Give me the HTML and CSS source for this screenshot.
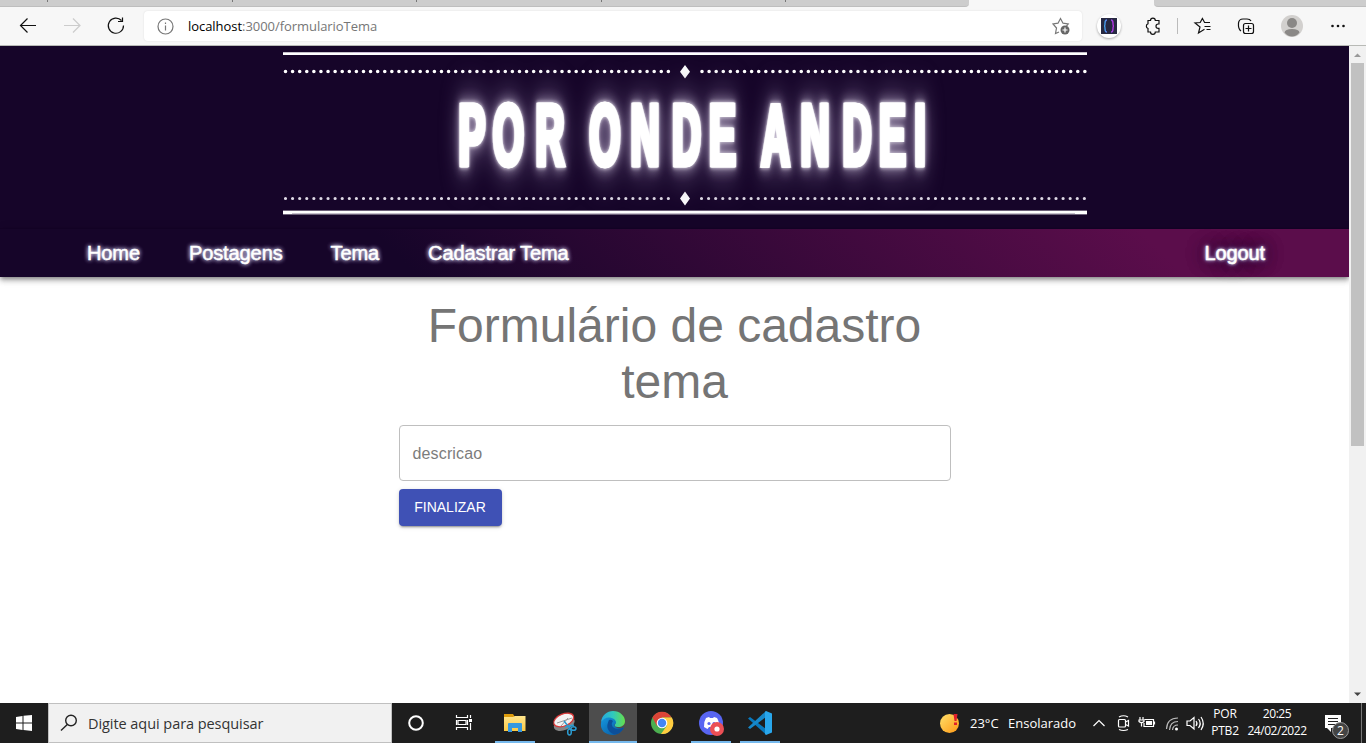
FILE: index.html
```html
<!DOCTYPE html>
<html lang="pt-BR">
<head>
<meta charset="utf-8">
<title>Por Onde Andei</title>
<link rel="stylesheet" href="styles.css">
</head>
<body>
<div class="tabs"><div class="tabs-left"><i></i><i></i><i></i><i></i><i></i></div><div class="tab-active"></div><div class="tabs-right"></div></div>
<header class="toolbar">
  <svg class="tb-nav" width="144" height="38" fill="none" stroke="#111" stroke-width="1.2">
    <path d="M36 18.5H20.5M27.500 11.500L20.500 18.500L27.500 25.500"/>
    <path stroke="#ccc" d="M64 18.500H79.500M73 11.500L80 18.500L73 25.500"/>
    <path d="M121.500 13.500A7.600 7.600 0 1 0 123.500 18.500M122.500 10.500V14.500H118"/>
  </svg>
  <div class="address">
    <svg width="17" height="17" fill="none" stroke="#777" stroke-width="1.2"><circle cx="8.500" cy="8.500" r="7.500"/><path d="M8.500 7.500V12.500M8.500 4.500V6"/></svg>
    <span class="url"><b>localhost</b>:3000/formularioTema</span>
    <svg class="fav" width="18" height="18" fill="none" stroke="#777" stroke-width="1.200"><path d="M7 15L3.500 16.500L4.500 11L1 7L6 6.200L8.500 1.500L11 6.200L16.200 7L14.500 9"/><circle cx="13" cy="13" r="4.500" fill="#666" stroke="none"/><path stroke="#fff" d="M13 10.500V15.500M10.500 13H15.500"/></svg>
  </div>
  <svg class="tb-actions" width="284" height="38" fill="none" stroke="#111" stroke-width="1.200">
    <defs><linearGradient id="br"><stop offset="0" stop-color="#3aa8e8"/><stop offset="1" stop-color="#6478e8"/></linearGradient><linearGradient id="br2"><stop offset="0" stop-color="#8a4ce0"/><stop offset="1" stop-color="#c42be0"/></linearGradient></defs>
    <circle class="ext" cx="27" cy="19" r="12" fill="#fff" stroke="none"/>
    <path fill="#272942" stroke="none" d="M19 11h16v16H19z"/>
    <path stroke="url(#br)" stroke-width="1.400" d="M25 13Q23 13 23 16.500Q23 19 22 19Q23 19 23 21.500Q23 25 25 25"/><path stroke="url(#br2)" stroke-width="1.400" d="M29 13Q31 13 31 16.500Q31 19 32 19Q31 19 31 21.500Q31 25 29 25"/>
    <path d="M66 13.500H68.500A2.400 2.400 0 0 1 73.300 13.500H77V17H76.200A2.200 2.200 0 0 0 76.200 21.400H77V25H73.300A2.400 2.400 0 0 1 68.500 25H66V21.500A2.500 2.500 0 0 1 66 16.800Z"/>
    <path stroke="#bbb" stroke-width="1" d="M95.500 11V27"/>
    <path d="M122.500 22.300L116.500 26L118 20L113 16L118.200 15.500L120.400 11.500L122.600 15.500H128M122.500 19.500H128.500M124.500 22.500H128.500"/>
    <path d="M159 24Q156 22 156.500 16Q157 12 161 12H165Q168 12 169 14"/><rect x="161.500" y="16.500" width="10" height="10" rx="2"/><path d="M166.500 18.500V24.500M163.500 21.500H169.500"/>
    <g stroke="none"><circle cx="210" cy="19" r="11" fill="#d2d0ce"/><circle cx="210" cy="16" r="5" fill="#8a8886"/><path fill="#8a8886" d="M202.500 25.500Q203 22 210 22T217.500 25.500Q214.500 29.500 210 29.500T202.500 25.500"/><g fill="#111"><circle cx="250.500" cy="19" r="1.300"/><circle cx="256" cy="19" r="1.300"/><circle cx="261.500" cy="19" r="1.300"/></g></g>
  </svg>
</header>
<div class="viewport">
  <main class="page">
    <svg class="banner" width="1349" height="183" viewBox="0 46 1349 183" role="img" aria-label="Por onde andei">
      <path fill="#fff" d="M283 52.300H1087V55H283z"/><path fill="#cbbdd6" d="M353 52H1017V53H353z"/>
      <path fill="#c6c0cc" d="M283 210.500H1087V214.500H283z"/><path fill="#fff" d="M283 211H1087V213H283zM283 212h9v2h-9zM1075 212h12v2h-12z"/>
      <g class="dots"><path d="M285.500 71.500H669M702 71.500H1086"/><path class="small" d="M285.500 198.500H669M701.500 198.500H1085"/></g>
      <path fill="#fff" d="M685 65L690 71.700L685 78.500L680 71.700zM685 191.500L690 198.500L685 205.500L680 198.500z"/>
      <g class="title" transform="scale(.455 1)"><text y="165" x="1037.400 1117.600 1208.800 1252.700 1329.700 1417.600 1508.800 1587.900 1641.800 1704.400 1791.200 1883.500 1961.500 2022">POR ONDE ANDEI</text></g>
    </svg>
    <nav class="nav"><a>Home</a><a>Postagens</a><a>Tema</a><a>Cadastrar Tema</a><a class="logout">Logout</a></nav>
    <form class="form">
      <h1>Formulário de cadastro tema</h1>
      <div class="field">descricao</div>
      <div class="submit">FINALIZAR</div>
    </form>
  </main>
  <div class="scroll"><svg width="17" height="17"><path fill="#999" d="M5 11L8.500 7.500L12 11z"/></svg><div class="thumb"></div><svg class="down" width="17" height="17"><path fill="#444" d="M5 6.500L8.500 10L12 6.500z"/></svg></div>
</div>
<footer class="taskbar">
  <svg width="48" height="40"><path fill="#fff" d="M16 14L22.500 13V19.500H16zM23.500 12.800L32 12V19.500H23.500zM16 20.500H22.500V27L16 26zM23.500 20.500H32V28L23.500 27z"/></svg>
  <div class="search"><svg width="18" height="18" fill="none" stroke="#222" stroke-width="1.400"><circle cx="11" cy="6.500" r="5.300"/><path d="M7.300 10.500L1 16.500"/></svg><span>Digite aqui para pesquisar</span></div>
  <svg class="apps" width="398" height="40" viewBox="392 0 398 40" fill="none">
    <defs>
      <linearGradient id="eg" x1="0" x2="1"><stop offset="0" stop-color="#25a7e0"/><stop offset=".5" stop-color="#30c9bd"/><stop offset="1" stop-color="#66df4b"/></linearGradient>
      <linearGradient id="eb" x1="0" x2="1" y2="1"><stop offset="0" stop-color="#1597df"/><stop offset="1" stop-color="#07549c"/></linearGradient>
      <linearGradient id="fd" x2="0" y2="1"><stop offset="0" stop-color="#ffe58c"/><stop offset="1" stop-color="#fbc943"/></linearGradient>
    </defs>
    <circle cx="416" cy="20" r="6.800" stroke="#fff" stroke-width="2"/>
    <path stroke="#fff" stroke-width="1.200" d="M456.500 12V14.500H467.500V12M456.500 27V24.500H467.500V27M458 17.500H466V21.500H458zM456.500 17V22M467.500 17V22M470.500 12V15M470.500 20V27"/><path fill="#fff" d="M469 16h3v3h-3z"/>
    <path fill="#dd9b0b" d="M504 11h9l2 3h-11z"/><path fill="url(#fd)" d="M504 14h9l2-1h10.500v15H504z"/><path fill="#3598df" d="M508 21Q508 20 509 20H521Q522 20 522 21V29H518V25H512V29H508z"/>
    <g transform="rotate(-22 564 19)"><ellipse cx="563.500" cy="21" rx="11" ry="6" fill="#858585"/><ellipse cx="564.500" cy="17" rx="10.500" ry="6" fill="#f2f2f2" stroke="#d73939" stroke-width="1.300"/></g><path stroke="#999" d="M557 20L572 15M561 23L568 15"/><path stroke="#2b9bd0" stroke-width="1.500" d="M564 18L571 27M565 24L574 22"/><ellipse cx="569.500" cy="29" rx="1.800" ry="3" stroke="#2b9bd0" stroke-width="1.500"/><ellipse cx="573.500" cy="25.500" rx="2.500" ry="1.800" stroke="#2b9bd0" stroke-width="1.500"/>
    <path fill="#4d4d4d" d="M589 0h48v38h-48z"/>
    <path fill="url(#eb)" d="M601 20C602 14 608 13 613 15C618 17 618 20 615 21C613 23 617 27 624 24.500C621 30 617 32 613 32C605 32 600 27 601 20"/><path fill="#0c4f9a" d="M609 17Q604 27 614 31.500Q621 31 624 24.500Q618 27 614 25Q610 22 613 18Q611 16 609 17"/><path fill="url(#eg)" d="M601 19C602 12 607 8 613 8C620 8 625 13 625 18C625 22 622 24 618 24Q614 24 615 21.500C617 20 616 17 613 15.500C608 13 604 15 601 19"/>
    <circle cx="662" cy="20" r="11" fill="#4caf50"/><path fill="#db4437" d="M652.400 14.500A11 11 0 0 1 671.600 14.500H662L657 23z"/><path fill="#ffcd40" d="M671.800 14.500A11 11 0 0 1 661 31L667 22.500L662 14.500z"/><circle cx="662" cy="20" r="5.300" fill="#fff"/><circle cx="662" cy="20" r="4.200" fill="#4285f4"/>
    <circle cx="711" cy="20" r="12" fill="#5865f2"/><path fill="#fff" d="M706 15L709 14L710 15H713L714 14L717 15Q720 20 719 24L715.500 26L714 24H709L707.500 26L704 24Q703.500 19 706 15"/><circle cx="709" cy="20.500" r="1.600" fill="#5865f2"/><circle cx="714" cy="20.500" r="1.600" fill="#5865f2"/><circle cx="717" cy="26" r="7" fill="#ec4f55"/><circle cx="717" cy="26" r="2.600" fill="#fff"/>
    <path fill="#0879be" d="M748 15.500L750 14L768 27.500L766 31.500z"/><path fill="#1688ca" d="M748 24.500L766 8L768 12.500L750 26z"/><path fill="#29a7ec" d="M766 8L772 10.500V29.500L766 32L765 31V9z"/>
    <path fill="#76b9ed" d="M495 38h40v2h-40zM589 38h48v2h-48zM691 38h40v2h-40zM740 38h40v2h-40z"/>
  </svg>
  <svg class="weather" width="20" height="20"><defs><linearGradient id="sun" x2="1" y2="1"><stop offset="0" stop-color="#ffe16b"/><stop offset="1" stop-color="#ff9814"/></linearGradient></defs><circle cx="9.500" cy="10.500" r="9.500" fill="url(#sun)"/><path fill="#e0202b" d="M13.500 1h4l-1 7h-2zM14 9.500h3v2.500h-3z"/></svg>
  <span class="temp">23°C</span><span class="cond">Ensolarado</span>
  <svg class="tray" width="120" height="40" viewBox="1090 0 120 40" fill="none" stroke="#fff" stroke-width="1.200">
    <path d="M1093.500 23L1099 17.500L1104.500 23"/>
    <path d="M1119 14Q1123.500 11.500 1128 14M1119 26.500Q1123.500 28.500 1128 26.500"/><rect x="1118.500" y="16.500" width="7" height="7.500" rx="1"/><path d="M1125.500 19L1128.500 17.500V23L1125.500 21.500"/>
    <path d="M1144.500 16.500H1153.500V23.500H1144V20M1154.500 18.500V21.500M1140 14V17M1143 14V17M1139 17H1144V18.500Q1141.500 21 1139 18.500zM1141.500 20V23.500"/><path fill="#fff" stroke="none" d="M1146 18h6v4h-6z"/>
    <g stroke="#bbb"><path d="M1166.500 26Q1167 15 1178 15M1169.500 27Q1170 18.500 1178 18.500M1172.500 27Q1173 22 1178 22"/></g><circle cx="1176.500" cy="26" r="1.500" fill="#fff" stroke="none"/>
    <path d="M1187 18H1190L1194 14.500V26L1190 22.500H1187zM1196 18Q1198 20.500 1196 23M1198.500 16Q1202 20.500 1198.500 25M1201 14Q1205.500 20.500 1201 27"/>
  </svg>
  <div class="lang"><span>POR</span><span>PTB2</span></div>
  <div class="clock"><span>20:25</span><span>24/02/2022</span></div>
  <svg class="notice" width="55" height="40" viewBox="1311 0 55 40"><path fill="#fff" d="M1325 12h16v13h-10v4l-4-4h-2z"/><path stroke="#222" d="M1328 15.500h10M1328 18.500h10M1328 21.500h8"/><circle cx="1340.500" cy="27.500" r="8" fill="#444" stroke="#999"/><text x="1340.500" y="32">2</text><path stroke="#777" d="M1361.500 0V40"/></svg>
</footer>
</body>
</html>
```
FILE: styles.css
```css
* { box-sizing: border-box; }
body { margin: 0; width: 1366px; height: 743px; overflow: hidden; background: #fff; font-family: "Liberation Sans", sans-serif; }
svg { display: block; flex: none; }
.tabs { display: flex; height: 7px; background: #f7f7f7; }
.tabs-left { width: 969px; background: #cdcdcd; border-radius: 0 0 4px 0; border-bottom: 1px solid #bebebe; display: flex; padding-left: 47px; gap: 183.500px; }
.tabs-left i { width: 1px; height: 2px; background: #777; }
.tab-active { width: 185px; }
.tabs-right { flex: 1; background: #cdcdcd; border-radius: 0 0 0 4px; border-bottom: 1px solid #bebebe; }
.toolbar { display: flex; height: 39px; background: #f7f7f7; border-bottom: 1px solid #b8bab6; }
.address { width: 938px; height: 30px; margin-top: 4px; padding: 0 12px 0 13px; display: flex; align-items: center; background: #fff; border-radius: 4px; box-shadow: 0 0 2px #ddd; }
.url { margin-left: 14px; font: 13px "Open Sans", sans-serif; color: #767676; letter-spacing: -.05px; }
.url b { font-weight: 400; color: #000; }
.fav { margin-left: auto; }
.ext { filter: drop-shadow(0 1px 1px #aaa); }
.viewport { display: flex; height: 657px; }
.page { width: 1349px; }
.banner { background: #160529; }
.dots { stroke: #fff; stroke-width: 3.600; stroke-linecap: round; stroke-dasharray: 0 7.090; }
.dots .small { stroke-width: 3.200; stroke: #ded9e5; }
.title { filter: drop-shadow(2px 0 0 #fff) drop-shadow(-2px 0 0 #fff) drop-shadow(0 0 2px #e4dfea) drop-shadow(0 0 7px #9c8fab) drop-shadow(0 0 18px #65547a); }
.title text { font: bold 87px "Liberation Sans", sans-serif; fill: #fff; stroke: #fff; stroke-width: 4.500; text-anchor: middle; }
.nav { height: 48px; display: flex; align-items: center; padding: 0 84px 0 87px; gap: 49px; color: #fff; font-size: 20px; letter-spacing: -.1px; background: linear-gradient(45deg, #160529 30%, #5b0d4b 85%); box-shadow: 0 2px 4px -1px #0005, 0 4px 5px #0003, 0 1px 10px #0002; text-shadow: 0 0 4px #fff, 0 0 5px #b5aaff; -webkit-text-stroke: .5px #fff; }
.nav a:nth-child(3) { margin-left: -1px; }
.nav .logout { margin-left: auto; text-shadow: 0 0 3px #fff, 0 0 5px #a6b0ff, 0 0 18px #160529, 0 0 18px #160529; }
.form { width: 552px; margin: 21px auto 0; }
.form h1 { margin: 0; font-size: 48px; font-weight: 400; line-height: 56px; text-align: center; color: #757575; }
.field { height: 56px; margin-top: 15px; padding: 0 13px; border: 1px solid #bfbfbf; border-radius: 4px; line-height: 56px; font-size: 16px; letter-spacing: .15px; color: #7c7c7c; }
.submit { width: 103px; height: 37px; margin-top: 8px; border-radius: 4px; background: #3f51b5; color: #fff; text-align: center; line-height: 37px; font-size: 14px; letter-spacing: 0; box-shadow: 0 3px 1px -2px #0003, 0 2px 2px #0002, 0 1px 5px #0002; }
.scroll { width: 17px; background: #f1f1f1; display: flex; flex-direction: column; }
.thumb { width: 13px; height: 383px; margin-left: 2px; background: #c1c1c1; }
.down { margin-top: auto; }
.taskbar { height: 40px; display: flex; align-items: center; background: #1e1e1e; color: #fff; font: 13px "Open Sans", sans-serif; white-space: nowrap; }
.search { width: 344px; height: 40px; background: #f1f1f1; border: 1px solid #c0c0c0; display: flex; align-items: center; gap: 10px; padding-left: 11px; color: #333; font-size: 14.500px; letter-spacing: -.06px; flex: none; }
.weather { margin-left: 150px; }
.temp { width: 38px; margin-left: 10px; }
.cond { width: 82px; }
.lang, .clock { display: flex; flex-direction: column; align-items: center; flex: none; line-height: 17px; font-size: 12px; position: relative; top: -1px; }
.lang { width: 30px; letter-spacing: -.2px; }
.clock { width: 71px; padding-left: 3px; letter-spacing: -.45px; }
.notice { fill: none; }
.notice text { fill: #fff; font: 12px "Open Sans", sans-serif; text-anchor: middle; }
```
